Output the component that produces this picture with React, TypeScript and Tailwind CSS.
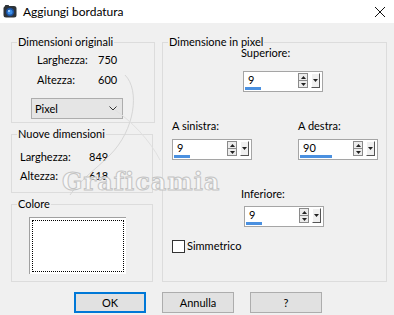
import React from "react";

function GroupBox({ title, className, children }: { title: string; className: string; children?: React.ReactNode }) {
  return (
    <div className={`relative border border-[#dcdcdc] ${className}`}>
      <span className="absolute -top-[8px] left-[5px] px-[1px] bg-[#f0f0f0] leading-[14px]">{title}</span>
      {children}
    </div>
  );
}

function SpinBox({ value, bar }: { value: string; bar: number }) {
  return (
    <div className="relative w-[80px] h-[21px] bg-white border border-[#a5a5a5]">
      <span className="absolute left-[4px] top-[1px] leading-[14px]">{value}</span>
      <div className="absolute left-[1px] top-[15px] h-[3px] bg-[#4a90e0]" style={{ width: bar }} />
      {/* up / down arrows */}
      <div className="absolute left-[54px] top-[1px] w-[10px] h-[15px] border border-[#8a8a8a] bg-[#ececec] flex flex-col">
        <div className="flex-1 flex items-center justify-center border-b border-[#8a8a8a]">
          <svg width="5" height="3" viewBox="0 0 5 3"><path d="M0 3 L2.5 0 L5 3 Z" fill="#222" /></svg>
        </div>
        <div className="flex-1 flex items-center justify-center">
          <svg width="5" height="3" viewBox="0 0 5 3"><path d="M0 0 L2.5 3 L5 0 Z" fill="#222" /></svg>
        </div>
      </div>
      {/* dropdown button */}
      <div className="absolute left-[67px] top-[1px] w-[9px] h-[15px] border-t border-l border-white border-r border-b border-r-[#555] border-b-[#555] bg-[#f0f0f0] flex items-center justify-center">
        <svg width="5" height="3" viewBox="0 0 5 3"><path d="M0 0 L2.5 3 L5 0 Z" fill="#222" /></svg>
      </div>
    </div>
  );
}

function Button({ label, primary }: { label: string; primary?: boolean }) {
  return (
    <button
      className={`w-[72px] h-[21px] bg-[#e1e1e1] leading-[14px] ${
        primary ? "border-2 border-[#0078d7]" : "border border-[#adadad]"
      }`}
    >
      {label}
    </button>
  );
}

export default function App() {
  return (
    <div className="relative w-[394px] h-[315px] overflow-hidden bg-[#f0f0f0] text-[11px] text-black [font-family:Lato,sans-serif]">
      {/* title bar */}
      <div className="h-[23px] bg-white flex items-center pl-[3px]">
        <svg width="14" height="13" viewBox="0 0 14 13">
          <rect x="0.5" y="1" width="13" height="11.5" rx="2.5" fill="#2e3338" />
          <rect x="2" y="0" width="4" height="2" rx="0.5" fill="#2e3338" />
          <circle cx="7" cy="7" r="4.2" fill="#1b4f9c" />
          <circle cx="7" cy="7" r="2.6" fill="#3b8ee8" />
          <circle cx="6" cy="6" r="0.9" fill="#cfe6ff" />
        </svg>
        <span className="ml-[6px] text-[12px] leading-[16px]">Aggiungi bordatura</span>
        <svg className="ml-auto mr-[9px]" width="10" height="10" viewBox="0 0 10 10">
          <path d="M0 0 L10 10 M10 0 L0 10" stroke="#111" strokeWidth="1" />
        </svg>
      </div>

      {/* groups */}
      <div className="flex pl-[11px] pt-[19px] gap-[7px]">
        <div className="w-[144px] flex flex-col">
          <GroupBox title="Dimensioni originali" className="w-[144px] h-[81px] pt-[10px] pl-[25px]">
            <div className="flex leading-[14px]">
              <span className="w-[61px]">Larghezza:</span>
              <span>750</span>
            </div>
            <div className="flex leading-[14px] mt-[6px]">
              <span className="w-[61px]">Altezza:</span>
              <span>600</span>
            </div>
            <div className="mt-[11px] -ml-[6px] w-[92px] h-[21px] border border-[#adadad] bg-[#e5e5e5] flex items-center pl-[3px] pr-[5px]">
              <span className="leading-[14px]">Pixel</span>
              <svg className="ml-auto" width="8" height="5" viewBox="0 0 8 5">
                <path d="M0.5 0.5 L4 4 L7.5 0.5" stroke="#333" strokeWidth="1" fill="none" />
              </svg>
            </div>
          </GroupBox>
          <GroupBox title="Nuove dimensioni" className="mt-[11px] w-[142px] h-[59px] pt-[15px] pl-[8px]">
            <div className="flex leading-[14px]">
              <span className="w-[69px]">Larghezza:</span>
              <span>849</span>
            </div>
            <div className="flex leading-[14px] mt-[5px]">
              <span className="w-[69px]">Altezza:</span>
              <span>618</span>
            </div>
          </GroupBox>
          <GroupBox title="Colore" className="mt-[11px] w-[142px] h-[78px] pt-[12px] pl-[17px]">
            <div className="w-[97px] h-[57px] bg-white border-t border-l border-[#a0a0a0] p-[2px]">
              <div className="w-full h-full border border-dotted border-black" />
            </div>
          </GroupBox>
        </div>

        <GroupBox title="Dimensione in pixel" className="w-[225px] h-[240px] pt-[3px]">
          <div className="pl-[78px]">
            <div className="leading-[14px]">Superiore:</div>
            <div className="mt-[11px] ml-[2px]">
              <SpinBox value="9" bar={16} />
            </div>
          </div>
          <div className="flex pl-[9px] mt-[27px]">
            <div className="w-[126px]">
              <div className="leading-[14px]">A sinistra:</div>
              <div className="mt-[6px]">
                <SpinBox value="9" bar={16} />
              </div>
            </div>
            <div>
              <div className="leading-[14px]">A destra:</div>
              <div className="mt-[6px]">
                <SpinBox value="90" bar={32} />
              </div>
            </div>
          </div>
          <div className="pl-[78px] mt-[27px]">
            <div className="leading-[14px]">Inferiore:</div>
            <div className="mt-[5px] ml-[3px]">
              <SpinBox value="9" bar={16} />
            </div>
          </div>
          <div className="flex items-center pl-[9px] mt-[12px]">
            <div className="w-[13px] h-[13px] bg-white border border-[#333]" />
            <span className="ml-[2px] leading-[14px]">Simmetrico</span>
          </div>
        </GroupBox>
      </div>

      {/* buttons */}
      <div className="flex pl-[74px] mt-[10px] gap-[16px]">
        <Button label="OK" primary />
        <Button label="Annulla" />
        <Button label="?" />
      </div>

      {/* watermark */}
      <svg className="absolute left-[40px] top-[70px] pointer-events-none" width="140" height="130" viewBox="0 0 140 130">
        <path d="M85 5 C100 20 95 60 70 85 C55 100 40 110 30 125" stroke="#d6d6d6" strokeWidth="1" fill="none" />
        <path d="M75 40 C90 50 110 70 120 90" stroke="#e0e0e0" strokeWidth="1" fill="none" />
      </svg>
      <span className="absolute left-[62px] top-[170px] pointer-events-none text-[24px] leading-[24px] font-bold tracking-[1px] text-[#f7f7f7] [-webkit-text-stroke:1px_#c4c4c4] [font-family:'DejaVu_Serif',serif]">
        Graficamia
      </span>
    </div>
  );
}
